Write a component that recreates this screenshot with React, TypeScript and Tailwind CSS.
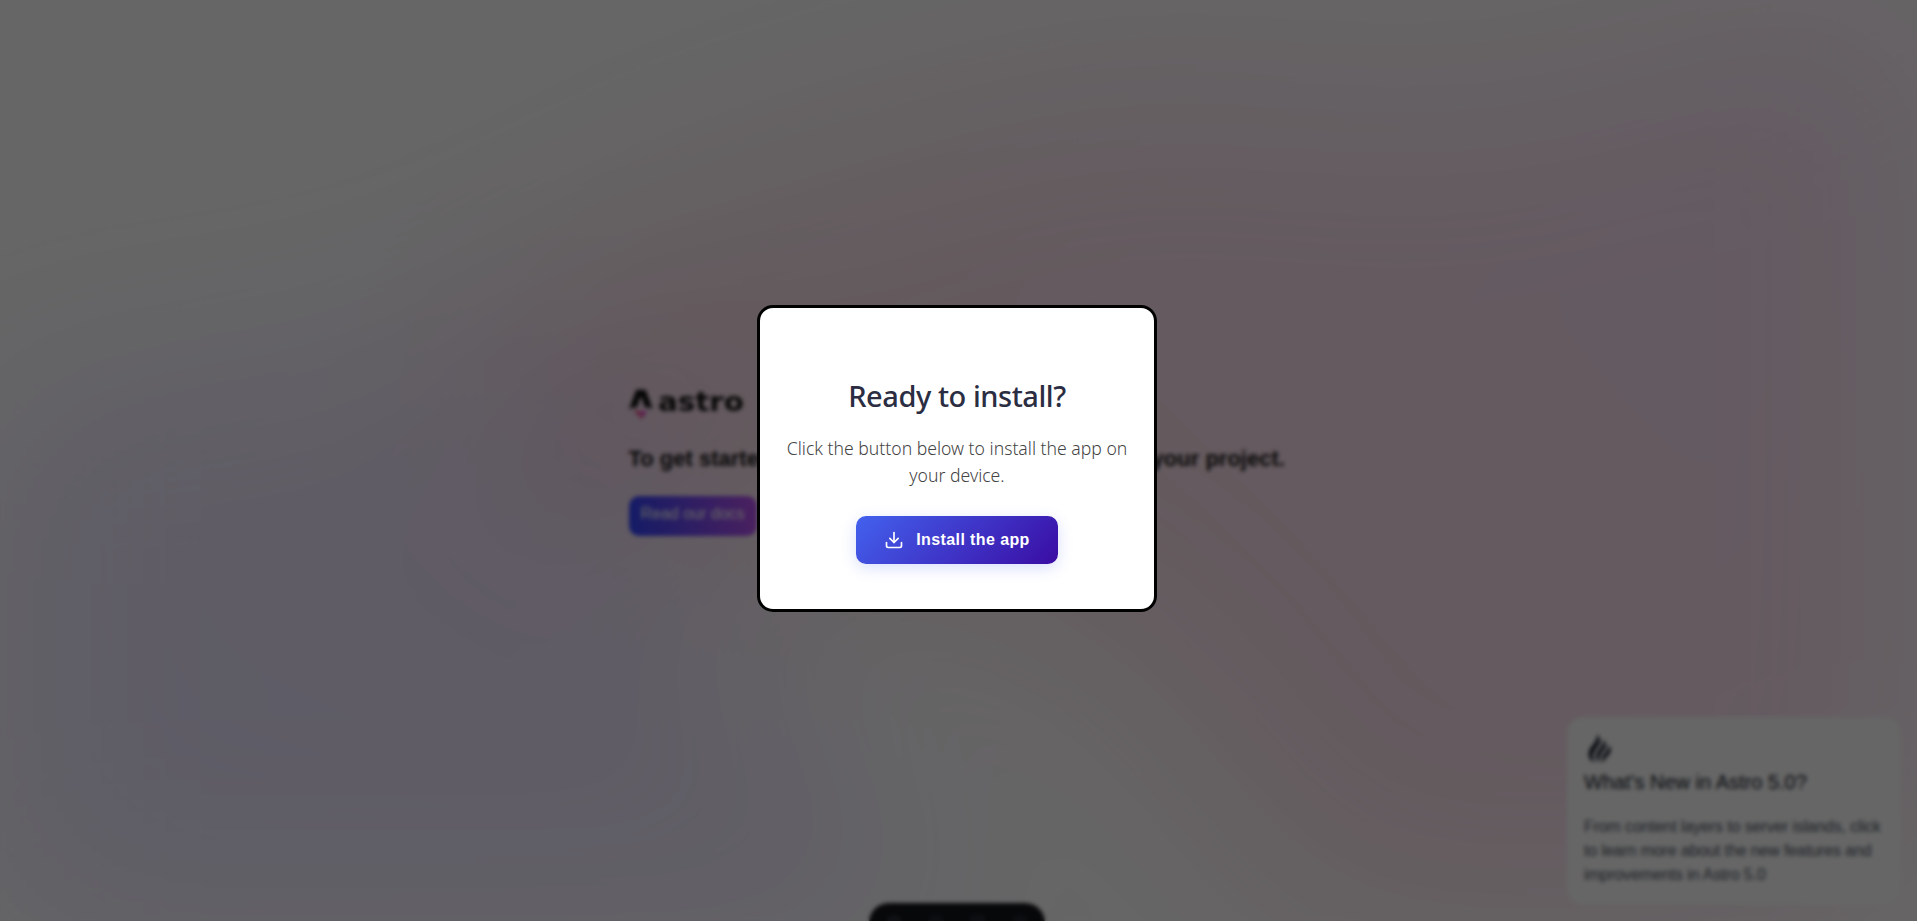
function Background() {
  return (
    <svg
      className="absolute inset-0 h-full w-full overflow-hidden blur-[100px]"
      viewBox="0 0 1440 1024"
      preserveAspectRatio="none"
      fill="none"
    >
      <path
        fill="url(#violet)"
        fillRule="evenodd"
        opacity=".145"
        d="M-217.58 475.75c91.82-72.02 225.52-29.38 341.2-44.74C240 415.56 372.33 315.14 466.77 384.9c102.9 76.02 44.74 246.76 90.31 366.31 29.83 78.24 90.48 136.14 129.48 210.23 57.92 109.99 169.67 208.23 155.9 331.77-13.52 121.26-103.42 264.33-224.23 281.37-141.96 20.03-232.72-220.96-374.06-196.99-151.7 25.73-172.68 330.24-325.85 315.72-128.6-12.2-110.9-230.73-128.15-358.76-12.16-90.14 65.87-176.25 44.1-264.57-26.42-107.2-167.12-163.46-176.72-273.45-10.15-116.33 33.01-248.75 124.87-320.79Z"
      />
      <path
        fill="url(#rose)"
        fillRule="evenodd"
        opacity=".154"
        d="M1103.43 115.43c146.42-19.45 275.33-155.84 413.5-103.59 188.09 71.13 409 212.64 407.06 413.88-1.94 201.25-259.28 278.6-414.96 405.96-130 106.35-240.24 294.39-405.6 265.3-163.7-28.8-161.93-274.12-284.34-386.66-134.95-124.06-436-101.46-445.82-284.6-9.68-180.38 247.41-246.3 413.54-316.9 101.01-42.93 207.83 21.06 316.62 6.61Z"
      />
      <defs>
        <linearGradient id="violet" x1="-373" x2="700" y1="1400" y2="300" gradientUnits="userSpaceOnUse">
          <stop stopColor="#3245FF" />
          <stop offset="1" stopColor="#BC52EE" />
        </linearGradient>
        <linearGradient id="rose" x1="373" x2="1995" y1="1100" y2="118" gradientUnits="userSpaceOnUse">
          <stop stopColor="#D83333" />
          <stop offset="1" stopColor="#F041FF" />
        </linearGradient>
      </defs>
    </svg>
  );
}

function AstroLogo() {
  return (
    <div className="flex h-12 w-[115px] items-center">
      <svg className="h-12 w-6 shrink-0" viewBox="0 0 24 48">
        <path
          fill="url(#flame)"
          d="M7.77 36.35C6.4 35.11 6 32.51 6.57 30.62c.99 1.2 2.35 1.57 3.75 1.78 2.18.33 4.31.2 6.33-.78.23-.12.44-.27.7-.42.18.55.23 1.1.17 1.67a4.56 4.56 0 0 1-1.94 3.23c-.43.32-.9.61-1.34.91-1.38.94-1.76 2.03-1.24 3.62l.05.17a3.63 3.63 0 0 1-1.6-1.38 3.87 3.87 0 0 1-.63-2.1c0-.37 0-.74-.05-1.1-.13-.9-.55-1.3-1.33-1.32a1.56 1.56 0 0 0-1.63 1.26c0 .06-.03.12-.05.2Z"
        />
        <path
          fill="#111"
          d="M.02 30.31s4.02-1.95 8.05-1.95l3.04-9.4c.11-.45.44-.76.82-.76.37 0 .7.31.82.76l3.04 9.4c4.77 0 8.05 1.95 8.05 1.95L17 11.71c-.2-.56-.53-.91-.98-.91H7.83c-.44 0-.76.35-.97.9L.02 30.31Z"
        />
        <defs>
          <linearGradient id="flame" x1="6.33" x2="19.43" y1="40.8" y2="34.6" gradientUnits="userSpaceOnUse">
            <stop stopColor="#D83333" />
            <stop offset="1" stopColor="#F041FF" />
          </linearGradient>
        </defs>
      </svg>
      <span className="mb-[2px] ml-[5px] origin-left scale-x-113 font-['DejaVu_Sans',sans-serif] text-[26px] leading-none font-bold text-[#111]">
        astro
      </span>
    </div>
  );
}

function Hero() {
  return (
    <section className="flex w-[660px] flex-col items-start pb-[7px]">
      <AstroLogo />
      <h1 className="mt-[19px] text-[22px] leading-[25px] font-bold whitespace-nowrap text-[#111]">
        To get started, open the{" "}
        <code className="px-[9px] font-['DejaVu_Sans_Mono',monospace] text-[22px]">src/pages</code> directory in your project.
      </h1>
      <a className="mt-[25px] flex h-10 w-32 items-center justify-center rounded-[10px] bg-linear-[83deg,#3245ff,#bc52ee] pb-1 text-base whitespace-nowrap text-white">
        Read our docs
      </a>
    </section>
  );
}

function NewsCard() {
  return (
    <aside className="absolute right-4 bottom-4 h-[188px] w-[334px] rounded-2xl border border-white bg-white px-4 py-[15px]">
      <svg className="size-8" viewBox="0 0 32 32" fill="#111827">
        <path d="M24.667 12c1.333 1.414 2 3.192 2 5.334 0 4.62-4.934 5.7-7.334 12C18.444 28.567 18 27.456 18 26c0-4.642 6.667-7.053 6.667-14Zm-5.334-5.333c1.6 1.65 2.4 3.43 2.4 5.333 0 6.602-8.06 7.59-6.4 17.334C13.111 27.787 12 25.564 12 22.666c0-4.434 7.333-8 7.333-16Zm-6-5.333C15.111 3.555 16 5.556 16 7.333c0 8.333-11.333 10.962-5.333 22-3.488-.774-6-4-6-8 0-8.667 8.666-10 8.666-20Z" />
      </svg>
      <h2 className="mt-[3px] text-[20px] leading-7 text-[#111827]">What's New in Astro 5.0?</h2>
      <p className="mt-[19px] text-base leading-6 tracking-[-0.13px] whitespace-nowrap text-[#4b5563]">
        From content layers to server islands, click
        <br />
        to learn more about the new features and
        <br />
        improvements in Astro 5.0
      </p>
    </aside>
  );
}

function DevToolbar() {
  return (
    <div className="absolute bottom-[-22px] left-[869px] flex h-10 w-44 items-start justify-around rounded-full bg-[#13151a] px-1 pt-3">
      <span className="size-4 rounded-full bg-[#2a2d35]" />
      <span className="size-4 rounded-full bg-[#22252c]" />
      <span className="size-4 rounded bg-[#22252c]" />
      <span className="size-4 rounded-full bg-[#22252c]" />
    </div>
  );
}

function DownloadIcon() {
  return (
    <svg
      className="size-5"
      viewBox="0 0 24 24"
      fill="none"
      stroke="currentColor"
      strokeWidth="2"
      strokeLinecap="round"
      strokeLinejoin="round"
    >
      <path d="M21 15v4a2 2 0 0 1-2 2H5a2 2 0 0 1-2-2v-4" />
      <path d="m7 10 5 5 5-5" />
      <path d="M12 15V3" />
    </svg>
  );
}

function InstallDialog() {
  return (
    <div
      role="dialog"
      className="flex h-[307px] w-[400px] flex-col items-center rounded-2xl border-3 border-black bg-white pt-[70px] text-center"
    >
      <h2 className="font-['Noto_Sans',sans-serif] text-[29px] leading-9 font-medium tracking-[-0.45px] whitespace-nowrap text-[#2b2d42]">
        Ready to install?
      </h2>
      <p className="mt-[21px] font-['Noto_Sans',sans-serif] text-[17.6px] leading-[27px] font-light whitespace-nowrap text-[#444]">
        Click the button below to install the app on
        <br />
        your device.
      </p>
      <button className="mt-[27px] flex h-12 w-[202px] items-center justify-center gap-3 rounded-[10px] bg-linear-[135deg,#4361ee,#3a0ca3] text-base font-bold tracking-[0.4px] whitespace-nowrap text-white shadow-[0_4px_15px_rgba(67,97,238,0.2)]">
        <DownloadIcon />
        <span>Install the app</span>
      </button>
    </div>
  );
}

export default function App() {
  return (
    <div className="relative h-[921px] w-full overflow-hidden bg-white font-['Liberation_Sans',sans-serif]">
      <Background />
      <main className="relative flex h-full items-center justify-center">
        <Hero />
      </main>
      <NewsCard />
      <DevToolbar />
      <div className="absolute inset-0 flex items-center justify-center bg-black/60 pr-[3px] pb-[5px] backdrop-blur-[2px]">
        <InstallDialog />
      </div>
    </div>
  );
}
